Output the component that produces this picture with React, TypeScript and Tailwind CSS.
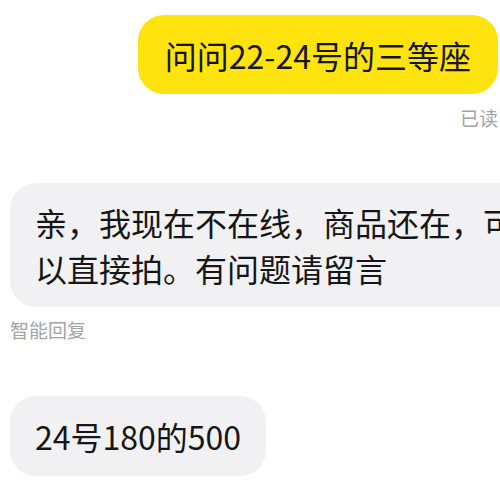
import React from "react";

export default function App() {
  return (
    <div className="w-[500px] h-[486px] overflow-hidden bg-white font-['Noto_Sans_CJK_SC',sans-serif] text-[#161616]">
      <div className="flex flex-col items-end pr-[2px] pt-[15px]">
        <div className="flex h-[79px] items-center rounded-[26px] bg-[#ffe30f] px-[27px] text-[32px] leading-[46px]">
          问问22-24号的三等座
        </div>
        <div className="mt-[12px] text-[19px] leading-[24px] text-[#a3a3a3]">已读</div>
      </div>

      <div className="mt-[53px] pl-[10px]">
        <div className="w-[540px] rounded-[26px] bg-[#f1f1f3] px-[25px] py-[16px] text-[32px] leading-[46px]">
          亲，我现在不在线，商品还在，可以直接拍。有问题请留言
        </div>
        <div className="mt-[11px] text-[19px] leading-[24px] text-[#a3a3a3]">智能回复</div>
      </div>

      <div className="mt-[54px] flex pl-[10px]">
        <div className="rounded-[26px] bg-[#f1f1f3] px-[25px] py-[17px] text-[32px] leading-[46px]">
          24号180的500
        </div>
      </div>
    </div>
  );
}
